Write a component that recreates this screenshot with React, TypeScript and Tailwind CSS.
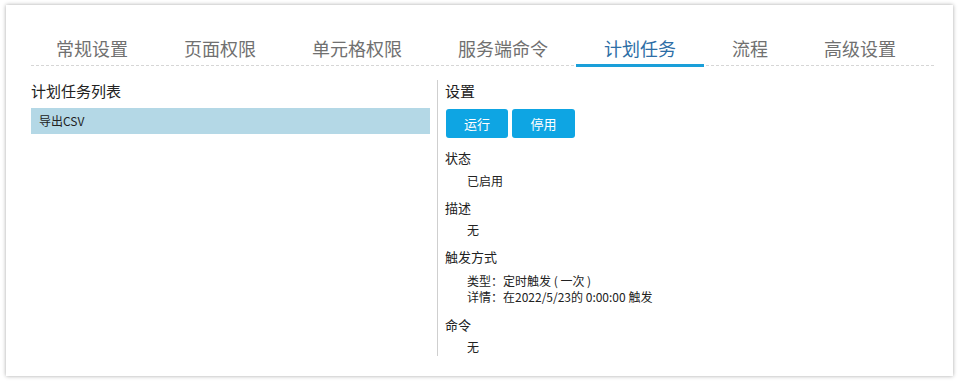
import React from "react";

const font = { fontFamily: '"Noto Sans CJK SC", "Noto Sans", sans-serif' };

const tabs = ["常规设置", "页面权限", "单元格权限", "服务端命令", "计划任务", "流程", "高级设置"];

export default function App() {
  return (
    <div className="w-[960px] h-[383px] bg-white pt-[5px] pl-[6px]" style={font}>
      <div className="w-[947px] h-[371px] bg-white shadow-[0_0_4px_rgba(0,0,0,0.35)] pt-[25px] pl-[25px]">
        <div className="w-[903px] border-b border-dashed border-[#d6d6d6] flex h-[36px]">
          <div className="flex -ml-[3px]">
            {tabs.map((t, i) => {
              const active = i === 4;
              return (
                <div
                  key={t}
                  className={
                    "px-7 h-[36px] leading-[36px] text-[18px] relative " +
                    (active ? "text-[#2d6ea6]" : "text-[#707070]")
                  }
                >
                  {t}
                  {active && (
                    <div className="absolute left-0 right-0 -bottom-[1px] h-[3px] bg-[#1a9fd9]" />
                  )}
                </div>
              );
            })}
          </div>
        </div>
        <div className="flex mt-[14px]">
          <div className="w-[399px]">
            <div className="text-[15px] text-[#222] leading-[22px] h-[24px]">计划任务列表</div>
            <div className="mt-[4px] h-[26px] bg-[#b4d8e6] text-[12px] leading-[26px] pl-[8px] text-[#222]">导出CSV</div>
          </div>
          <div className="w-px bg-[#cfcfcf] ml-[7px] h-[276px]" />
          <div className="pl-[7px] text-[#222]">
            <div className="text-[15px] leading-[22px] h-[24px]">设置</div>
            <div className="flex gap-[4px] mt-[5px] ml-px">
              <button className="w-[62px] h-[29px] rounded-[3px] bg-[#0ea5e3] text-white text-[13px]">运行</button>
              <button className="w-[63px] h-[29px] rounded-[3px] bg-[#0ea5e3] text-white text-[13px]">停用</button>
            </div>
            <div className="mt-[11px] text-[13px] leading-[18px]">状态</div>
            <div className="mt-[5px] pl-[22px] text-[12px] leading-[17px]">已启用</div>
            <div className="mt-[10px] text-[13px] leading-[18px]">描述</div>
            <div className="mt-[4px] pl-[22px] text-[12px] leading-[17px]">无</div>
            <div className="mt-[10px] text-[13px] leading-[18px]">触发方式</div>
            <div className="mt-[7px] pl-[22px] text-[12px] leading-[16px]">类型：定时触发 ( 一次 )</div>
            <div className="pl-[22px] text-[12px] leading-[16px]">详情：在2022/5/23的 0:00:00 触发</div>
            <div className="mt-[11px] text-[13px] leading-[18px]">命令</div>
            <div className="mt-[4px] pl-[22px] text-[12px] leading-[17px]">无</div>
          </div>
        </div>
      </div>
    </div>
  );
}
